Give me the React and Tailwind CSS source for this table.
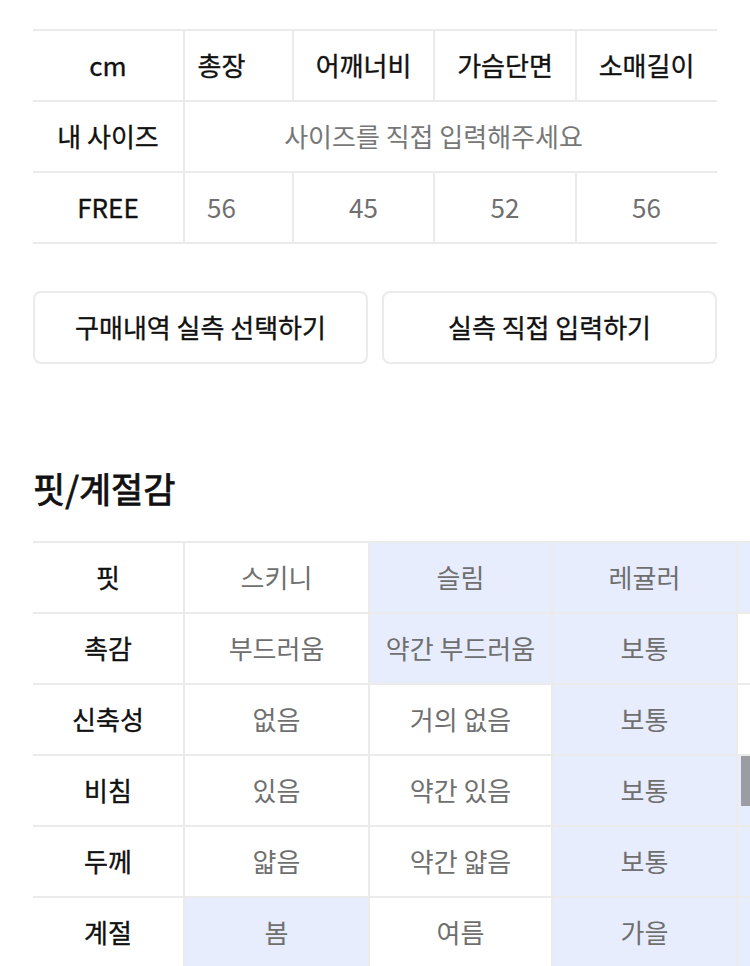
const sizeHeads = [
  { label: '총장', value: 56, pad: 'pr-[34px]' },
  { label: '어깨너비', value: 45, pad: '' },
  { label: '가슴단면', value: 52, pad: '' },
  { label: '소매길이', value: 56, pad: '' },
]

// last column runs off the screen, only its colour shows
const fitRows = [
  { label: '핏', cells: [['스키니', false], ['슬림', true], ['레귤러', true], ['', true]] },
  { label: '촉감', cells: [['부드러움', false], ['약간 부드러움', true], ['보통', true], ['', false]] },
  { label: '신축성', cells: [['없음', false], ['거의 없음', false], ['보통', true], ['', false]] },
  { label: '비침', cells: [['있음', false], ['약간 있음', false], ['보통', true], ['', true]] },
  { label: '두께', cells: [['얇음', false], ['약간 얇음', false], ['보통', true], ['', true]] },
  { label: '계절', cells: [['봄', true], ['여름', false], ['가을', true], ['', true]] },
]

const head = "font-normal text-[#111] [-webkit-text-stroke:0.35px_#111]"

const SizeTable = () => (
  <div className="mx-[33px] border-t-2 border-[#ebebeb]">
    <div className="grid h-[71px] grid-cols-[150px_109px_141px_142px_141px] border-b-2 border-[#ebebeb]">
      <div className={`flex items-center justify-center pb-[3px] ${head}`}>cm</div>
      {sizeHeads.map(h => (
        <div key={h.label} className={`flex items-center justify-center border-l-2 border-[#ebebeb] pb-[3px] ${head} ${h.pad}`}>
          {h.label}
        </div>
      ))}
    </div>
    <div className="grid h-[71px] grid-cols-[150px_533px] border-b-2 border-[#ebebeb]">
      <div className={`flex items-center justify-center pb-[3px] ${head}`}>내 사이즈</div>
      <div className="flex items-center justify-center border-l-2 border-[#ebebeb] pb-[3px] pr-[34px] text-[#777]">
        사이즈를 직접 입력해주세요
      </div>
    </div>
    <div className="grid h-[71px] grid-cols-[150px_109px_141px_142px_141px] border-b-2 border-[#ebebeb]">
      <div className={`flex items-center justify-center pb-[3px] ${head}`}>FREE</div>
      {sizeHeads.map(h => (
        <div key={h.label} className={`flex items-center justify-center border-l-2 border-[#ebebeb] pb-[3px] text-[#6f6f6f] ${h.pad}`}>
          {h.value}
        </div>
      ))}
    </div>
  </div>
)

const FitTable = () => (
  <div className="relative pl-[33px]">
    <div className="w-[888px] border-t-2 border-[#ebebeb]">
      {fitRows.map(row => (
        <div key={row.label} className="grid h-[71px] grid-cols-[150px_185px_183px_185px_185px] border-b-2 border-[#ebebeb]">
          <div className={`flex items-center justify-center pb-[3px] ${head}`}>{row.label}</div>
          {row.cells.map(([text, on], i) => (
            <div
              key={i}
              className={`flex items-center justify-center border-l-2 border-[#ebebeb] pb-[3px] text-[#6f6f6f] ${on ? 'bg-[#e7edfc]' : 'bg-white'}`}
            >
              {text}
            </div>
          ))}
        </div>
      ))}
    </div>
    {/* scroll thumb */}
    <div className="absolute right-0 top-[215px] h-[50px] w-[9px] bg-[#9b9da3]" />
  </div>
)

export default function App() {
  return (
    <div className="w-[750px] h-[966px] overflow-hidden bg-white pt-[29px] font-['Noto_Sans_CJK_KR','Noto_Sans',sans-serif] text-[26px] leading-normal">
      <SizeTable />

      <div className="mx-[33px] mt-[47px] grid grid-cols-2 gap-[14px]">
        <button className={`h-[73px] rounded-[8px] border-2 border-[#ebebeb] bg-white pb-[3px] ${head}`}>
          구매내역 실측 선택하기
        </button>
        <button className={`h-[73px] rounded-[8px] border-2 border-[#ebebeb] bg-white pb-[3px] ${head}`}>
          실측 직접 입력하기
        </button>
      </div>

      <h2 className="mx-[33px] mt-[104px] mb-[33px] text-[35px] leading-[40px] font-normal text-[#111] [-webkit-text-stroke:0.8px_#111]">핏/계절감</h2>

      <FitTable />
    </div>
  )
}
